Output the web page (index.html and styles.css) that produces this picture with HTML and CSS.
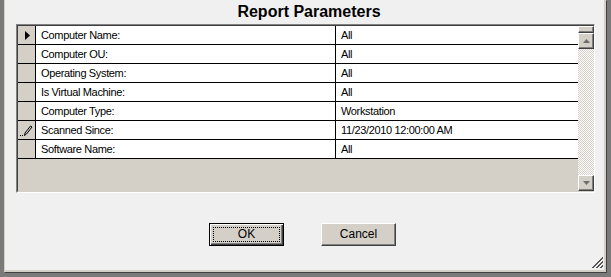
FILE: index.html
```html
<!DOCTYPE html>
<html>
<head>
<meta charset="utf-8">
<link rel="stylesheet" href="styles.css">
</head>
<body>
<div class="window">
  <div class="client">
    <h1 class="title">Report Parameters</h1>
    <div class="grid">
      <div class="body">
        <div class="row">
          <div class="rh"><svg width="5" height="9" viewBox="0 0 5 9"><polygon points="0,0 5,4.5 0,9" fill="#000"/></svg></div>
          <div class="cell label">Computer Name:</div>
          <div class="cell value">All</div>
        </div>
        <div class="row">
          <div class="rh"></div>
          <div class="cell label">Computer OU:</div>
          <div class="cell value">All</div>
        </div>
        <div class="row">
          <div class="rh"></div>
          <div class="cell label">Operating System:</div>
          <div class="cell value">All</div>
        </div>
        <div class="row">
          <div class="rh"></div>
          <div class="cell label">Is Virtual Machine:</div>
          <div class="cell value">All</div>
        </div>
        <div class="row">
          <div class="rh"></div>
          <div class="cell label">Computer Type:</div>
          <div class="cell value">Workstation</div>
        </div>
        <div class="row">
          <div class="rh"><svg width="13" height="11" viewBox="0 0 13 11"><rect x="0" y="10" width="1" height="1" fill="#000"/><rect x="2" y="10" width="1" height="1" fill="#000"/><path d="M4.5 10.5 L5 8 L10.5 1 L12 2 L6.5 9 Z" fill="none" stroke="#000" stroke-width="1"/></svg></div>
          <div class="cell label">Scanned Since:</div>
          <div class="cell value">11/23/2010 12:00:00 AM</div>
        </div>
        <div class="row">
          <div class="rh"></div>
          <div class="cell label">Software Name:</div>
          <div class="cell value">All</div>
        </div>
        <div class="filler"></div>
      </div>
      <div class="vscroll">
        <div class="thumb"></div>
        <div class="sbtn"><svg width="7" height="4" viewBox="0 0 7 4"><polygon points="3.5,0 7,4 0,4" fill="#6d6d6d"/></svg></div>
        <div class="track"></div>
        <div class="sbtn"><svg width="7" height="4" viewBox="0 0 7 4"><polygon points="0,0 7,0 3.5,4" fill="#6d6d6d"/></svg></div>
      </div>
    </div>
    <div class="buttons">
      <div class="btn default"><span class="focus">OK</span></div>
      <div class="btn">Cancel</div>
    </div>
  </div>
  <svg class="grip" width="13" height="13" viewBox="0 0 13 13">
    <g stroke-width="1">
      <line x1="12" y1="1" x2="1" y2="12" stroke="#555"/>
      <line x1="12" y1="2" x2="2" y2="12" stroke="#555"/>
      <line x1="12" y1="5" x2="5" y2="12" stroke="#555"/>
      <line x1="12" y1="6" x2="6" y2="12" stroke="#555"/>
      <line x1="12" y1="9" x2="9" y2="12" stroke="#555"/>
      <line x1="12" y1="10" x2="10" y2="12" stroke="#555"/>
    </g>
  </svg>
</div>
</body>
</html>
```
FILE: styles.css
```css
html, body {
  margin: 0;
  padding: 0;
  width: 611px;
  height: 277px;
  overflow: hidden;
  background: #f0f0f0;
}
.window {
  position: relative;
  box-sizing: border-box;
  width: 611px;
  height: 277px;
  display: flex;
  border-left: 4px solid #7a7a7a;
  border-right: 5px solid #7a7a7a;
  border-bottom: 5px solid #7a7a7a;
}
.client {
  flex: 1;
  display: flex;
  flex-direction: column;
  background: #f0f0f0;
  border-left: 1px solid #d4d0c8;
  border-right: 2px solid #d4d0c8;
  border-bottom: 2px solid #d4d0c8;
  box-shadow: 1px 1px 0 #404040;
  font-family: "Liberation Sans", Arial, sans-serif;
}
.title {
  margin: 0;
  height: 24px;
  line-height: 24px;
  font-size: 16px;
  font-weight: bold;
  text-align: center;
  padding-left: 9px;
  color: #000;
}
.grid {
  margin-left: 11px;
  width: 579px;
  box-sizing: border-box;
  height: 169px;
  display: flex;
  border-top: 1px solid #808080;
  border-left: 1px solid #808080;
  border-right: 1px solid #fff;
  border-bottom: 1px solid #fff;
}
.body {
  flex: 1;
  display: flex;
  flex-direction: column;
  background: #d4d0c8;
  border-top: 1px solid #404040;
  border-left: 1px solid #404040;
  border-bottom: 1px solid #d4d0c8;
}
.row {
  display: flex;
  height: 19px;
  box-sizing: border-box;
  border-bottom: 1px solid #000;
  font-size: 11px;
  letter-spacing: -0.35px;
  line-height: 18px;
  color: #000;
}
.rh {
  width: 17px;
  background: #d4d0c8;
  border-right: 1px solid #000;
  display: flex;
  align-items: center;
  justify-content: center;
}
.row:first-child .rh svg { margin-left: 1px; }
.cell {
  background: #fff;
  white-space: nowrap;
  overflow: hidden;
}
.label {
  width: 294px;
  padding-left: 5px;
  border-right: 1px solid #000;
}
.value {
  flex: 1;
  padding-left: 5px;
}
.filler { flex: 1; }
.vscroll {
  width: 16px;
  display: flex;
  flex-direction: column;
  border-top: 1px solid #404040;
  border-bottom: 1px solid #d4d0c8;
}
.thumb, .sbtn {
  box-sizing: border-box;
  background: #d4d0c8;
  border-top: 1px solid #fff;
  border-left: 1px solid #fff;
  border-right: 1px solid #404040;
  border-bottom: 1px solid #404040;
  box-shadow: inset -1px -1px 0 #808080;
}
.thumb { height: 7px; }
.sbtn {
  height: 16px;
  display: flex;
  align-items: center;
  justify-content: center;
}
.track {
  flex: 1;
  background: repeating-conic-gradient(#d4d0c8 0 25%, #fff 0 50%) 0 0 / 2px 2px;
}
.buttons {
  display: flex;
  justify-content: center;
  gap: 37px;
  margin-top: 30px;
  padding-right: 4px;
}
.btn {
  box-sizing: border-box;
  width: 75px;
  height: 23px;
  background: #d4d0c8;
  border-top: 1px solid #fff;
  border-left: 1px solid #fff;
  border-right: 1px solid #404040;
  border-bottom: 1px solid #404040;
  box-shadow: inset -1px -1px 0 #808080;
  font-size: 12px;
  line-height: 21px;
  text-align: center;
  color: #000;
}
.btn.default {
  border: 1px solid #000;
  box-shadow: inset 1px 1px 0 #fff, inset -1px -1px 0 #404040, inset -2px -2px 0 #808080;
  padding: 3px;
}
.focus {
  display: block;
  height: 100%;
  box-sizing: border-box;
  border: 1px dotted #000;
  line-height: 13px;
}
.grip {
  position: absolute;
  right: 2px;
  bottom: 3px;
}
```
